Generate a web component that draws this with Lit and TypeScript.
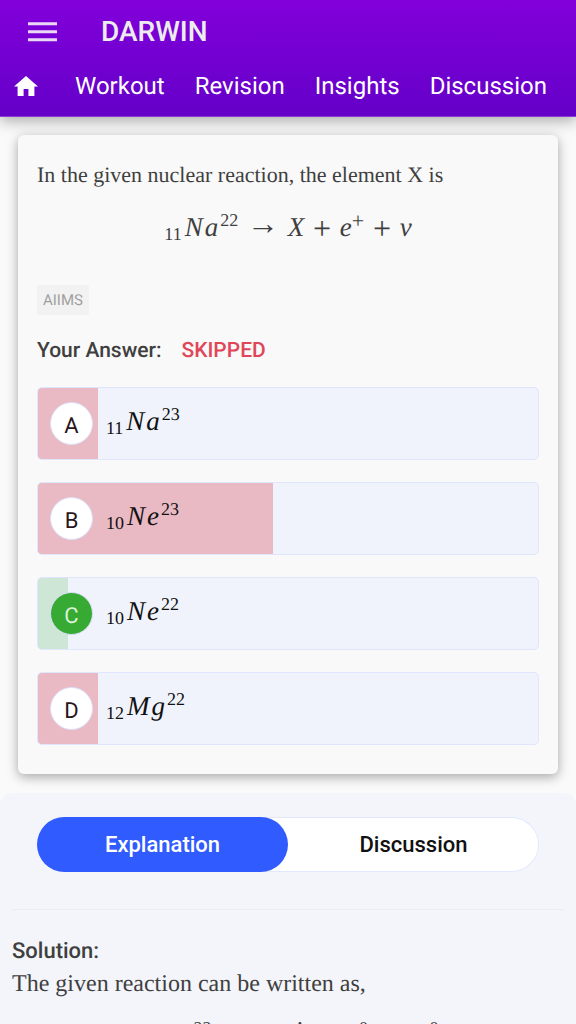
import { LitElement, html, css } from "lit";
import { customElement, state } from "lit/decorators.js";
import { classMap } from "lit/directives/class-map.js";
import { styleMap } from "lit/directives/style-map.js";

interface Option {
  letter: string;
  sub: string;
  symbol: string;
  sup: string;
  share: number;
  correct?: boolean;
}

const OPTIONS: Option[] = [
  { letter: "A", sub: "11", symbol: "Na", sup: "23", share: 12 },
  { letter: "B", sub: "10", symbol: "Ne", sup: "23", share: 47 },
  { letter: "C", sub: "10", symbol: "Ne", sup: "22", share: 6, correct: true },
  { letter: "D", sub: "12", symbol: "Mg", sup: "22", share: 12 },
];

const LINKS = ["Workout", "Revision", "Insights", "Discussion", "Syllabus"];
const TABS = ["Explanation", "Discussion"];

const nuclide = (sub: string, symbol: string, sup: string) => html`
  <span class="nuclide"><span class="sub">${sub}</span><i>${[...symbol].map((c) => html`<span class="glyph">${c}</span>`)}</i><span class="sup">${sup}</span></span>
`;

@customElement("app-root")
export class AppRoot extends LitElement {
  @state() private tab = 0;

  static styles = css`
    :host {
      display: flex;
      flex-direction: column;
      height: 100vh;
      overflow: hidden;
      background: #fafafa;
      color: #3f3f3f;
      font-family: Roboto, "Liberation Sans", sans-serif;
      text-rendering: geometricPrecision;
    }
    * {
      box-sizing: border-box;
    }
    .header {
      flex: none;
      z-index: 1;
      background: linear-gradient(#8200da, #6400c8);
      border-bottom: 1px solid #8a3cd2;
      box-shadow: 0 4px 14px rgba(0, 0, 0, 0.32);
      color: #fff;
    }
    .brand {
      display: flex;
      align-items: center;
      gap: 44px;
      height: 63px;
      padding: 0 28px;
    }
    .menu {
      display: flex;
      padding: 0;
      border: 0;
      background: none;
      cursor: pointer;
    }
    .title {
      margin: 0;
      color: #ececec;
      font-size: 28px;
      font-weight: 500;
      line-height: 32px;
    }
    .nav {
      display: flex;
      align-items: center;
      gap: 30px;
      height: 53px;
      padding: 0 14px 8px;
      overflow: hidden;
      white-space: nowrap;
    }
    .nav a {
      color: #fff;
      font-size: 24px;
      line-height: 32px;
      text-decoration: none;
    }
    .nav .home {
      display: flex;
      flex: none;
      margin-right: 7px;
    }
    .main {
      flex: 1;
      min-height: 0;
      overflow: auto;
      scrollbar-width: none;
    }
    .card {
      margin: 18px 18px 19px;
      padding: 24px 19px 29px;
      border-radius: 6px;
      background: #f9f9f9;
      box-shadow: 0 3px 12px rgba(0, 0, 0, 0.34);
    }
    .question,
    .text {
      margin: 0;
      font-family: "Liberation Serif", serif;
      font-size: 22px;
      line-height: 32px;
    }
    .text {
      font-size: 24px;
    }
    .math {
      text-align: center;
      white-space: nowrap;
      font-family: "Liberation Serif", serif;
      font-size: 27px;
      line-height: 32px;
    }
    .question + .math {
      margin-top: 20px;
    }
    .nuclide {
      font-family: "Liberation Serif", serif;
      font-size: 27px;
      line-height: 32px;
      white-space: nowrap;
    }
    .nuclide i {
      margin: 0 2px 0 3px;
    }
    .glyph + .glyph {
      margin-left: 2px;
    }
    .op,
    .arrow {
      margin: 0 2px;
      font-size: 32px;
      line-height: 0;
    }
    .op {
      vertical-align: -3px;
    }
    .arrow {
      vertical-align: 2px;
    }
    .sub,
    .sup {
      font-size: 18px;
      line-height: 0;
    }
    .sub {
      vertical-align: -4px;
    }
    .sup {
      vertical-align: 10px;
    }
    .charge {
      font-size: 22px;
      line-height: 0;
      vertical-align: 8px;
    }
    .tag {
      display: inline-block;
      margin-top: 42px;
      padding: 0 6px;
      border-radius: 2px;
      background: #f2f2f2;
      color: #a0a0a0;
      font-size: 15px;
      line-height: 30px;
    }
    .answer {
      display: flex;
      gap: 20px;
      margin: 20px 0;
      font-size: 21px;
      font-weight: 500;
      line-height: 32px;
    }
    .skipped {
      color: #df4759;
    }
    .options {
      display: grid;
      gap: 22px;
      margin: 0;
      padding: 0;
      list-style: none;
    }
    .option {
      --fill: #e9b9c4;
      display: flex;
      align-items: center;
      gap: 13px;
      height: 73px;
      padding: 0 12px;
      border: 1px solid #dfe6fd;
      border-radius: 5px;
      background: linear-gradient(var(--fill), var(--fill)) 0 0 / var(--share) 100% no-repeat #f0f3fb;
      color: #111;
    }
    .option .nuclide {
      padding-bottom: 6px;
    }
    .option.correct {
      --fill: #cde6d6;
    }
    .letter {
      display: grid;
      place-items: center;
      flex: none;
      width: 43px;
      height: 43px;
      padding-top: 6px;
      border: 1px solid #dcdff8;
      border-radius: 50%;
      background: #fff;
      color: #2a1520;
      font-size: 22px;
      line-height: 32px;
    }
    .correct .letter {
      background: #36aa32;
      color: #d9f2d8;
    }
    .solution {
      padding: 24px 12px;
      border-radius: 12px 12px 0 0;
      background: #f4f5fb;
    }
    .tabs {
      display: grid;
      grid-template-columns: 1fr 1fr;
      margin: 0 25px;
      border-radius: 28px;
      background: #fff;
      box-shadow: inset 0 0 0 1px #e1e8fd;
    }
    .tab {
      height: 55px;
      padding: 0;
      border: 0;
      border-radius: 28px;
      background: none;
      color: #111;
      font: 500 22px/32px Roboto, "Liberation Sans", sans-serif;
      cursor: pointer;
    }
    .tab.active {
      background: #2f5bff;
      color: #fff;
    }
    .rule {
      height: 1px;
      margin: 37px 0 25px;
      border: 0;
      background: #ebecee;
    }
    .heading {
      margin: 0;
      font-size: 22px;
      font-weight: 500;
      line-height: 33px;
    }
    .text + .math {
      margin-top: 19px;
    }
  `;

  render() {
    return html`
      <header class="header">
        <div class="brand">
          <button class="menu" aria-label="Menu">
            <svg width="29" height="20" viewBox="0 0 29 20" fill="#e9d9f7">
              <path d="M0 0.3h29v3H0zM0 8.3h29v3H0zM0 16.3h29v3H0z" />
            </svg>
          </button>
          <h1 class="title">DARWIN</h1>
        </div>
        <nav class="nav">
          <a class="home" href="#home" aria-label="Home">
            <svg width="24" height="20" viewBox="2 3 20 17" preserveAspectRatio="none" fill="#fff">
              <path d="M10 20v-6h4v6h5v-8h3L12 3 2 12h3v8z" />
            </svg>
          </a>
          ${LINKS.map((l) => html`<a href="#${l.toLowerCase()}">${l}</a>`)}
        </nav>
      </header>
      <main class="main">
        <section class="card">
          <p class="question">In the given nuclear reaction, the element X is</p>
          <div class="math">
            ${nuclide("11", "Na", "22")} <span class="arrow">→</span> <i>X</i> <span class="op">+</span>
            <span><i>e</i><span class="charge">+</span></span> <span class="op">+</span> <i>ν</i>
          </div>
          <span class="tag">AIIMS</span>
          <div class="answer"><span>Your Answer:</span><span class="skipped">SKIPPED</span></div>
          <ol class="options">
            ${OPTIONS.map(
              (o) => html`
                <li
                  class=${classMap({ option: true, correct: !!o.correct })}
                  style=${styleMap({ "--share": `${o.share}%` })}
                >
                  <span class="letter">${o.letter}</span>
                  ${nuclide(o.sub, o.symbol, o.sup)}
                </li>
              `
            )}
          </ol>
        </section>
        <section class="solution">
          <div class="tabs" role="tablist">
            ${TABS.map(
              (t, i) => html`
                <button
                  role="tab"
                  aria-selected=${i === this.tab ? "true" : "false"}
                  class=${classMap({ tab: true, active: i === this.tab })}
                  @click=${() => (this.tab = i)}
                >
                  ${t}
                </button>
              `
            )}
          </div>
          <hr class="rule" />
          <h2 class="heading">Solution:</h2>
          <p class="text">The given reaction can be written as,</p>
          <div class="math">
            ${nuclide("11", "Na", "22")} <span class="arrow">→</span> ${nuclide("Z", "X", "A")}
            <span class="op">+</span> ${nuclide("", "e", "0")} <span class="op">+</span>
            ${nuclide("0", "ν", "0")}
          </div>
        </section>
      </main>
    `;
  }
}
